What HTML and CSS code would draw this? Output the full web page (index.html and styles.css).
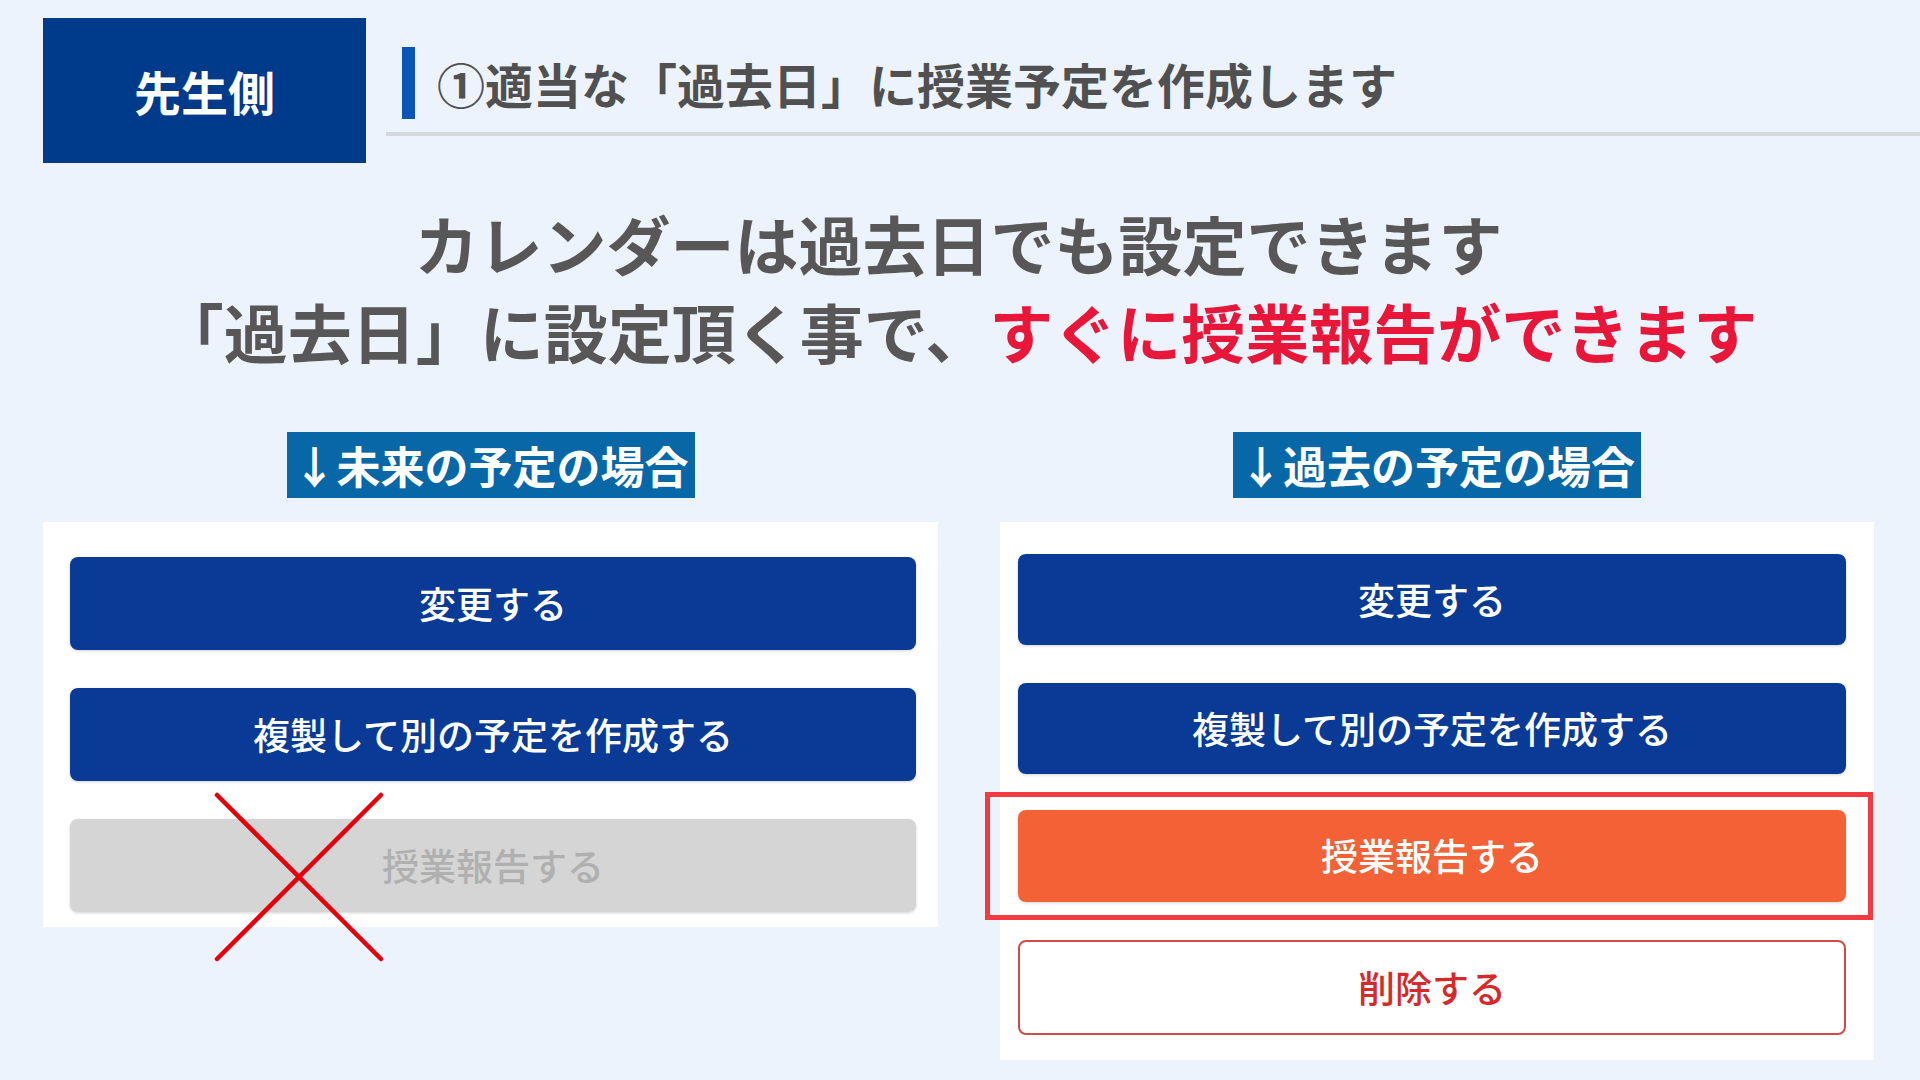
FILE: index.html
```html
<!DOCTYPE html>
<html lang="ja">

<head>
    <meta charset="utf-8">
    <title>先生側 - 過去日の授業予定</title>
    <link rel="stylesheet" href="styles.css">
</head>

<body>
    <div class="page">
        <header class="top">
            <div class="side-tag">先生側</div>
            <div class="step-title">
                <span class="step-bar"></span>
                <h2>①適当な「過去日」に授業予定を作成します</h2>
            </div>
        </header>

        <h1 class="lead">
            カレンダーは過去日でも設定できます<br>
            「過去日」に設定頂く事で、<span class="accent">すぐに授業報告ができます</span>
        </h1>

        <div class="compare">
            <section class="case">
                <div class="case-label">↓未来の予定の場合</div>
                <div class="panel panel-future">
                    <button class="btn btn-primary">変更する</button>
                    <button class="btn btn-primary">複製して別の予定を作成する</button>
                    <button class="btn btn-disabled">授業報告する</button>
                    <svg class="cross" width="168" height="168" viewBox="0 0 168 168">
                        <line x1="2" y1="2" x2="166" y2="166" />
                        <line x1="166" y1="2" x2="2" y2="166" />
                    </svg>
                </div>
            </section>

            <section class="case">
                <div class="case-label">↓過去の予定の場合</div>
                <div class="panel panel-past">
                    <button class="btn btn-primary">変更する</button>
                    <button class="btn btn-primary">複製して別の予定を作成する</button>
                    <div class="highlight">
                        <button class="btn btn-report">授業報告する</button>
                    </div>
                    <button class="btn btn-delete">削除する</button>
                </div>
            </section>
        </div>
    </div>
</body>
</html>
```

FILE: styles.css
```css
body {
    margin: 0;
    background-color: #ecf3fd;
    font-family: "Noto Sans CJK JP", "Noto Sans", sans-serif;
    color: #555555;
}

.page {
    width: 1831px;
    padding: 18px 0 0 43px;
}

/* header: tag box + step title with underline */
.top {
    display: flex;
    align-items: flex-start;
    margin-right: -46px;
}

.side-tag {
    width: 323px;
    height: 145px;
    flex-shrink: 0;
    background-color: #003a8a;
    color: #fff;
    font-size: 47px;
    font-weight: 700;
    display: flex;
    align-items: center;
    justify-content: center;
}

.step-title {
    flex: 1;
    margin-left: 20px;
    padding: 29px 0 13px 16px;
    border-bottom: 4px solid #d5d9de;
    display: flex;
    align-items: center;
}

.step-bar {
    width: 13px;
    height: 72px;
    background-color: #0a55b8;
    margin-right: 22px;
}

.step-title h2 {
    margin: 0;
    font-size: 48px;
    font-weight: 700;
    line-height: 72px;
    color: #505050;
}

.lead {
    margin: 35px 0 0;
    text-align: center;
    font-size: 64px;
    font-weight: 700;
    line-height: 88px;
    color: #575757;
}

.accent {
    color: #e8173a;
}

.compare {
    display: grid;
    grid-template-columns: 895px 874px;
    column-gap: 62px;
    margin-top: 58px;
}

.case {
    display: flex;
    flex-direction: column;
    align-items: center;
}

.case-label {
    height: 66px;
    padding: 0 6px;
    background-color: #0867a6;
    color: #fff;
    font-size: 44px;
    font-weight: 700;
    line-height: 66px;
    white-space: nowrap;
}

.panel {
    align-self: stretch;
    margin-top: 24px;
    background-color: #fff;
    display: flex;
    flex-direction: column;
    position: relative;
}

.panel-future {
    padding: 35px 22px 15px 27px;
    gap: 38px;
}

.panel-past {
    padding: 32px 28px 25px 18px;
}

.btn {
    display: block;
    width: 100%;
    height: 93px;
    border: none;
    border-radius: 8px;
    font-family: inherit;
    font-size: 37px;
    font-weight: 500;
    color: #fff;
    padding-bottom: 3px;
    box-shadow: 0 1px 3px rgba(0, 0, 0, 0.18);
}

.btn-primary {
    background-color: #083a96;
}

.btn-disabled {
    background-color: #d5d5d5;
    color: #b0b0b0;
}

.panel-past .btn {
    height: 91px;
}

.panel-past .btn + .btn {
    margin-top: 38px;
}

.highlight {
    margin: 18px -27px 0 -33px;
    padding: 13px 22px 13px 28px;
    border: 5px solid #f23a40;
}

.panel-past .btn-report {
    height: 92px;
    background-color: #f26236;
}

.panel-past .btn-delete {
    height: 95px;
    margin-top: 20px;
    background-color: #fff;
    border: 2px solid #d24a4a;
    color: #d62a2a;
    box-shadow: none;
}

/* red cross over the disabled report button */
.cross {
    position: absolute;
    left: 172px;
    top: 271px;
    overflow: visible;
}

.cross line {
    stroke: #e5000b;
    stroke-width: 4.5;
    stroke-linecap: round;
}
```
